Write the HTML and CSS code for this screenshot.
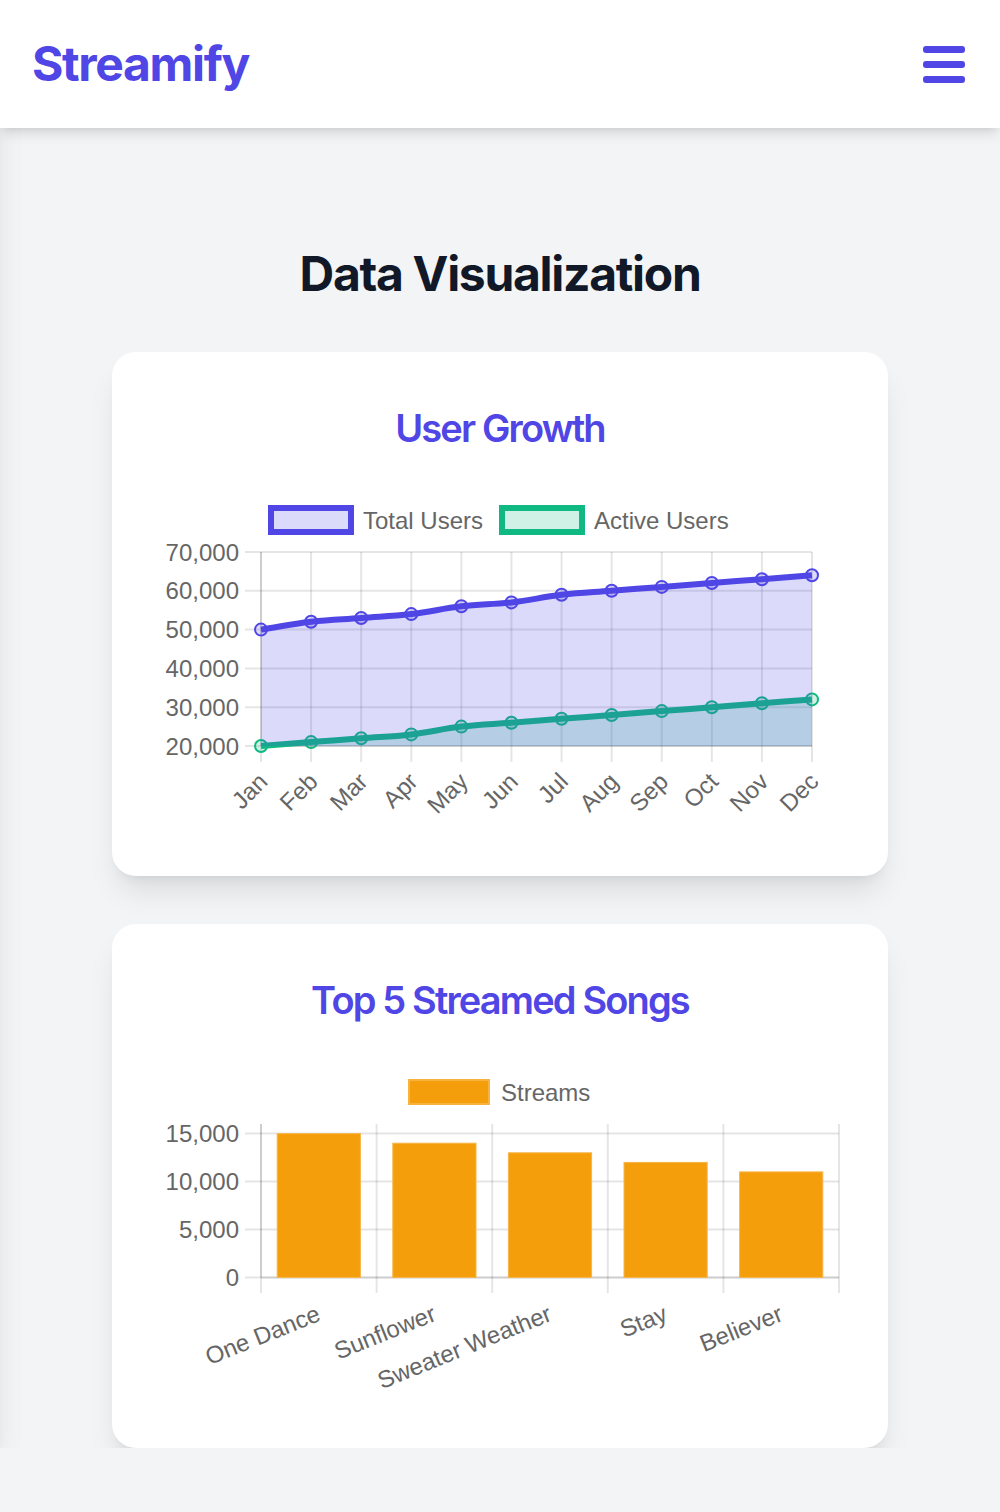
FILE: index.html
```html
<!DOCTYPE html>
<html lang="en">
<head>
<meta charset="utf-8">
<title>Streamify - Data Visualization</title>
<link rel="stylesheet" href="styles.css">
</head>
<body>
<div class="page">
  <aside class="drawer" aria-hidden="true"></aside>
  <header class="header">
    <div class="logo">Streamify</div>
    <button class="menu-btn" aria-label="Open menu">
      <svg class="menu-icon" width="42" height="37" viewBox="0 0 42 37">
        <rect x="0" y="0" width="42" height="7" rx="3"/>
        <rect x="0" y="15" width="42" height="7" rx="3"/>
        <rect x="0" y="30" width="42" height="7" rx="3"/>
      </svg>
    </button>
  </header>

  <main class="main">
    <h2 class="heading">Data Visualization</h2>

    <section class="card">
      <h3 class="card-title">User Growth</h3>
      <svg class="chart" width="680" height="340" viewBox="160 488 680 340">
        <!-- legend -->
        <rect class="legend-total" x="271" y="508" width="80" height="24"/>
        <text class="tick" x="363" y="520" dominant-baseline="central">Total Users</text>
        <rect class="legend-active" x="502" y="508" width="80" height="24"/>
        <text class="tick" x="594" y="520" dominant-baseline="central">Active Users</text>

        <!-- grid -->
        <path class="grid" d="M245 552H812M245 590.8H812M245 629.6H812M245 668.4H812M245 707.2H812M245 746H812"/>
        <path class="grid" d="M261 552V762M311.09 552V762M361.18 552V762M411.27 552V762M461.36 552V762M511.45 552V762M561.55 552V762M611.64 552V762M661.73 552V762M711.82 552V762M761.91 552V762M812 552V762"/>
        <path class="grid" d="M261 552V746M261 746H812"/>

        <!-- y ticks -->
        <g class="tick" text-anchor="end" dominant-baseline="central">
          <text x="239" y="552">70,000</text>
          <text x="239" y="590.8">60,000</text>
          <text x="239" y="629.6">50,000</text>
          <text x="239" y="668.4">40,000</text>
          <text x="239" y="707.2">30,000</text>
          <text x="239" y="746">20,000</text>
        </g>

        <!-- x ticks -->
        <g class="tick" text-anchor="end" dominant-baseline="central">
          <text transform="translate(263 777) rotate(-45)">Jan</text>
          <text transform="translate(313.09 777) rotate(-45)">Feb</text>
          <text transform="translate(363.18 777) rotate(-45)">Mar</text>
          <text transform="translate(413.27 777) rotate(-45)">Apr</text>
          <text transform="translate(463.36 777) rotate(-45)">May</text>
          <text transform="translate(513.45 777) rotate(-45)">Jun</text>
          <text transform="translate(563.55 777) rotate(-45)">Jul</text>
          <text transform="translate(613.64 777) rotate(-45)">Aug</text>
          <text transform="translate(663.73 777) rotate(-45)">Sep</text>
          <text transform="translate(713.82 777) rotate(-45)">Oct</text>
          <text transform="translate(763.91 777) rotate(-45)">Nov</text>
          <text transform="translate(814 777) rotate(-45)">Dec</text>
        </g>

        <!-- Active users dataset -->
        <path class="area-active" d="M261 746 C281.04 744.44 291.05 743.66 311.09 742.1 C331.13 740.54 341.14 739.74 361.18 738.2 C381.22 736.66 391.23 736.72 411.27 734.4 C431.31 732.08 441.32 728.94 461.36 726.6 C481.4 724.26 491.41 724.26 511.45 722.7 C531.49 721.14 541.51 720.34 561.55 718.8 C581.59 717.26 591.6 716.54 611.64 715 C631.68 713.46 641.69 712.66 661.73 711.1 C681.77 709.54 691.78 708.76 711.82 707.2 C731.86 705.64 741.87 704.86 761.91 703.3 C781.95 701.74 791.96 700.96 812 699.4 L812 746 L261 746 Z"/>
        <path class="line-active" d="M261 746 C281.04 744.44 291.05 743.66 311.09 742.1 C331.13 740.54 341.14 739.74 361.18 738.2 C381.22 736.66 391.23 736.72 411.27 734.4 C431.31 732.08 441.32 728.94 461.36 726.6 C481.4 724.26 491.41 724.26 511.45 722.7 C531.49 721.14 541.51 720.34 561.55 718.8 C581.59 717.26 591.6 716.54 611.64 715 C631.68 713.46 641.69 712.66 661.73 711.1 C681.77 709.54 691.78 708.76 711.82 707.2 C731.86 705.64 741.87 704.86 761.91 703.3 C781.95 701.74 791.96 700.96 812 699.4"/>
        <g class="pt-active">
          <circle cx="261" cy="746" r="6"/>
          <circle cx="311.09" cy="742.1" r="6"/>
          <circle cx="361.18" cy="738.2" r="6"/>
          <circle cx="411.27" cy="734.4" r="6"/>
          <circle cx="461.36" cy="726.6" r="6"/>
          <circle cx="511.45" cy="722.7" r="6"/>
          <circle cx="561.55" cy="718.8" r="6"/>
          <circle cx="611.64" cy="715" r="6"/>
          <circle cx="661.73" cy="711.1" r="6"/>
          <circle cx="711.82" cy="707.2" r="6"/>
          <circle cx="761.91" cy="703.3" r="6"/>
          <circle cx="812" cy="699.4" r="6"/>
        </g>

        <!-- Total users dataset -->
        <path class="area-total" d="M261 629.6 C281.04 626.48 291.05 624.12 311.09 621.8 C331.13 619.48 341.14 619.54 361.18 618 C381.22 616.46 391.23 616.44 411.27 614.1 C431.31 611.76 441.32 608.64 461.36 606.3 C481.4 603.96 491.41 604.7 511.45 602.4 C531.49 600.1 541.51 597.12 561.55 594.8 C581.59 592.48 591.6 592.38 611.64 590.8 C631.68 589.22 641.69 588.46 661.73 586.9 C681.77 585.34 691.78 584.54 711.82 583 C731.86 581.46 741.87 580.74 761.91 579.2 C781.95 577.66 791.96 576.86 812 575.3 L812 746 L261 746 Z"/>
        <path class="line-total" d="M261 629.6 C281.04 626.48 291.05 624.12 311.09 621.8 C331.13 619.48 341.14 619.54 361.18 618 C381.22 616.46 391.23 616.44 411.27 614.1 C431.31 611.76 441.32 608.64 461.36 606.3 C481.4 603.96 491.41 604.7 511.45 602.4 C531.49 600.1 541.51 597.12 561.55 594.8 C581.59 592.48 591.6 592.38 611.64 590.8 C631.68 589.22 641.69 588.46 661.73 586.9 C681.77 585.34 691.78 584.54 711.82 583 C731.86 581.46 741.87 580.74 761.91 579.2 C781.95 577.66 791.96 576.86 812 575.3"/>
        <g class="pt-total">
          <circle cx="261" cy="629.6" r="6"/>
          <circle cx="311.09" cy="621.8" r="6"/>
          <circle cx="361.18" cy="618" r="6"/>
          <circle cx="411.27" cy="614.1" r="6"/>
          <circle cx="461.36" cy="606.3" r="6"/>
          <circle cx="511.45" cy="602.4" r="6"/>
          <circle cx="561.55" cy="594.8" r="6"/>
          <circle cx="611.64" cy="590.8" r="6"/>
          <circle cx="661.73" cy="586.9" r="6"/>
          <circle cx="711.82" cy="583" r="6"/>
          <circle cx="761.91" cy="579.2" r="6"/>
          <circle cx="812" cy="575.3" r="6"/>
        </g>
      </svg>
    </section>

    <section class="card">
      <h3 class="card-title">Top 5 Streamed Songs</h3>
      <svg class="chart" width="680" height="340" viewBox="160 1060 680 340">
        <!-- legend -->
        <rect class="legend-bar" x="409" y="1080" width="80" height="24"/>
        <text class="tick" x="501" y="1092" dominant-baseline="central">Streams</text>

        <!-- grid -->
        <path class="grid" d="M245 1133.6H839M245 1181.5H839M245 1229.5H839M245 1277.4H839"/>
        <path class="grid" d="M261 1124V1293M376.6 1124V1293M492.2 1124V1293M607.8 1124V1293M723.4 1124V1293M839 1124V1293"/>
        <path class="grid" d="M261 1124V1277.4M261 1277.4H839"/>

        <!-- y ticks -->
        <g class="tick" text-anchor="end" dominant-baseline="central">
          <text x="239" y="1133.6">15,000</text>
          <text x="239" y="1181.5">10,000</text>
          <text x="239" y="1229.5">5,000</text>
          <text x="239" y="1277.4">0</text>
        </g>

        <!-- bars -->
        <g class="bar">
          <rect x="277.2" y="1133.6" width="83.2" height="143.8"/>
          <rect x="392.8" y="1143.2" width="83.2" height="134.2"/>
          <rect x="508.4" y="1152.8" width="83.2" height="124.6"/>
          <rect x="624" y="1162.4" width="83.2" height="115"/>
          <rect x="739.6" y="1171.9" width="83.2" height="105.5"/>
        </g>

        <!-- x ticks -->
        <g class="tick" text-anchor="end" dominant-baseline="central">
          <text transform="translate(318.8 1312) rotate(-22)">One Dance</text>
          <text transform="translate(434.4 1312) rotate(-22)">Sunflower</text>
          <text transform="translate(550 1312) rotate(-22)">Sweater Weather</text>
          <text transform="translate(665.6 1312) rotate(-22)">Stay</text>
          <text transform="translate(781.2 1312) rotate(-22)">Believer</text>
        </g>
      </svg>
    </section>
  </main>
</div>
</body>
</html>
```

FILE: styles.css
```css
* {
  box-sizing: border-box;
}

html,
body {
  margin: 0;
  background: #f3f4f6;
}

body {
  font-family: Inter, "Liberation Sans", Arial, sans-serif;
  color: #111827;
}

.page {
  position: relative;
}

.drawer {
  position: absolute;
  top: 0;
  bottom: 0;
  right: 100%;
  width: 320px;
  background: #ffffff;
  box-shadow: 0 20px 30px -6px rgba(0, 0, 0, 0.1), 0 8px 12px -8px rgba(0, 0, 0, 0.1);
}

.header {
  position: relative;
  z-index: 1;
  height: 128px;
  background: #ffffff;
  display: flex;
  align-items: center;
  justify-content: space-between;
  padding: 0 35px 0 32px;
  box-shadow: 0 8px 12px -2px rgba(0, 0, 0, 0.1), 0 4px 8px -4px rgba(0, 0, 0, 0.1);
}

.logo {
  font-size: 48px;
  line-height: 56px;
  font-weight: 700;
  letter-spacing: -1.35px;
  color: #4f46e5;
}

.menu-btn {
  border: 0;
  padding: 0;
  margin: 0;
  background: none;
  display: flex;
  cursor: pointer;
}

.menu-icon {
  display: block;
  fill: #4f46e5;
}

.main {
  padding-top: 118px;
  overflow: hidden;
}

.heading {
  margin: 0 0 50px;
  text-align: center;
  font-size: 48px;
  line-height: 56px;
  font-weight: 700;
  letter-spacing: -1.3px;
  color: #111827;
}

.card {
  width: 776px;
  margin: 0 auto 48px;
  background: #ffffff;
  border-radius: 24px;
  padding: 48px;
  box-shadow: 0 20px 30px -6px rgba(0, 0, 0, 0.1), 0 8px 12px -8px rgba(0, 0, 0, 0.1);
}

.card:last-child {
  margin-bottom: 0;
}

.card-title {
  margin: 0 0 32px;
  text-align: center;
  font-size: 38px;
  line-height: 56px;
  font-weight: 600;
  letter-spacing: -1.85px;
  color: #4f46e5;
}

.chart {
  display: block;
  width: 680px;
  height: 340px;
  overflow: visible;
}

.tick {
  font-family: "Liberation Sans", Arial, Helvetica, sans-serif;
  font-size: 24px;
  fill: #666666;
}

.grid {
  fill: none;
  stroke: rgba(0, 0, 0, 0.1);
  stroke-width: 2;
}

.legend-total {
  fill: rgba(79, 70, 229, 0.2);
  stroke: #4f46e5;
  stroke-width: 6;
}

.legend-active {
  fill: rgba(16, 185, 129, 0.2);
  stroke: #10b981;
  stroke-width: 6;
}

.legend-bar {
  fill: #f59e0b;
  stroke: #f7b23f;
  stroke-width: 2;
}

.area-total {
  fill: rgba(79, 70, 229, 0.2);
}

.line-total {
  fill: none;
  stroke: #4f46e5;
  stroke-width: 6;
  stroke-linejoin: round;
}

.pt-total circle {
  fill: rgba(79, 70, 229, 0.2);
  stroke: #4f46e5;
  stroke-width: 2;
}

.area-active {
  fill: rgba(16, 185, 129, 0.2);
}

.line-active {
  fill: none;
  stroke: #10b981;
  stroke-width: 6;
  stroke-linejoin: round;
}

.pt-active circle {
  fill: rgba(16, 185, 129, 0.2);
  stroke: #10b981;
  stroke-width: 2;
}

.bar rect {
  fill: #f49e0c;
  stroke: #f7b54a;
  stroke-width: 1;
}
```
